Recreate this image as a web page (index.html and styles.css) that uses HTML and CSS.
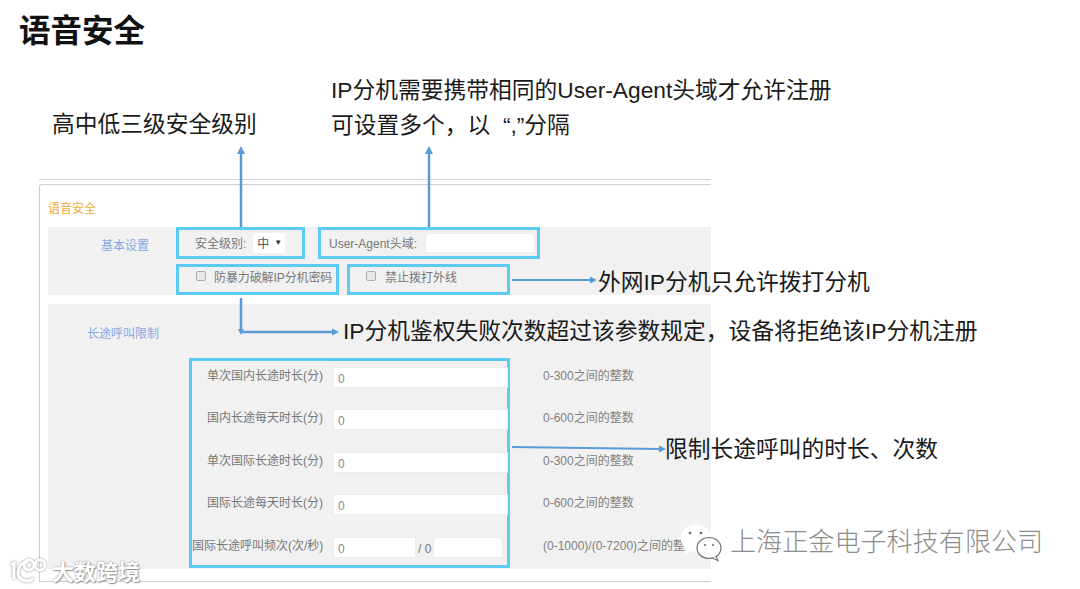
FILE: index.html
```html
<!DOCTYPE html>
<html lang="zh-CN">
<head>
<meta charset="utf-8">
<title>语音安全</title>
<link rel="stylesheet" href="styles.css">
</head>
<body>
<main class="slide">
  <h1 class="slide-title">语音安全</h1>

  <div class="rule"></div>
  <section class="panel">
    <h2 class="panel-title">语音安全</h2>

    <div class="block block-basic">
      <div class="block-label">基本设置</div>
      <div class="basic-rows">
        <div class="basic-row">
          <div class="box box-level">
            <span>安全级别:</span>
            <span class="select">中<i class="caret">▼</i></span>
          </div>
          <div class="box box-agent">
            <span>User-Agent头域:</span>
            <span class="field field-agent"></span>
          </div>
        </div>
        <div class="basic-row basic-row-checks">
          <label class="box box-brute"><span class="check"></span>防暴力破解IP分机密码</label>
          <label class="box box-outbound"><span class="check"></span>禁止拨打外线</label>
        </div>
      </div>
    </div>

    <div class="block block-long">
      <div class="block-label block-label-long">长途呼叫限制</div>
      <div class="box box-limits">
        <div class="limit-row"><span class="limit-name">单次国内长途时长(分)</span><span class="field field-wide">0</span></div>
        <div class="limit-row"><span class="limit-name">国内长途每天时长(分)</span><span class="field field-wide">0</span></div>
        <div class="limit-row"><span class="limit-name">单次国际长途时长(分)</span><span class="field field-wide">0</span></div>
        <div class="limit-row"><span class="limit-name">国际长途每天时长(分)</span><span class="field field-wide">0</span></div>
        <div class="limit-row"><span class="limit-name">国际长途呼叫频次(次/秒)</span><span class="field field-half">0</span><span class="slash">/ 0</span><span class="field field-third"></span></div>
      </div>
      <div class="hints">
        <div class="hint">0-300之间的整数</div>
        <div class="hint">0-600之间的整数</div>
        <div class="hint">0-300之间的整数</div>
        <div class="hint">0-600之间的整数</div>
        <div class="hint">(0-1000)/(0-7200)之间的整数</div>
      </div>
    </div>
  </section>

  <svg class="arrows" width="1080" height="589" viewBox="0 0 1080 589" aria-hidden="true">
    <g fill="none" stroke="#5b9bd5" stroke-width="2.500">
      <path d="M241 227V152"/>
      <path d="M429 227V152"/>
      <path d="M241 298V332H333"/>
    </g>
    <g fill="none" stroke="#5b9bd5" stroke-width="2">
      <path d="M512 280H592"/>
      <path d="M512 447L660 449"/>
    </g>
    <g fill="#5b9bd5">
      <path d="M241 146l-4 8h8z"/>
      <path d="M429 146l-4 8h8z"/>
      <path d="M597 280l-7-3.500v7z"/>
      <path d="M339 332l-7-3.500v7z"/>
      <path d="M666 449l-7-3.500v7z"/>
      <path d="M241 335l-3-6h6z"/>
    </g>
  </svg>

  <p class="callout callout-level">高中低三级安全级别</p>
  <p class="callout callout-agent">IP分机需要携带相同的User-Agent头域才允许注册<br>可设置多个，以&nbsp;&nbsp;“,”分隔</p>
  <p class="callout callout-outbound">外网IP分机只允许拨打分机</p>
  <p class="callout callout-brute">IP分机鉴权失败次数超过该参数规定，设备将拒绝该IP分机注册</p>
  <p class="callout callout-limits">限制长途呼叫的时长、次数</p>

  <div class="mark-company">
    <svg class="mark-wechat" width="46" height="40" viewBox="0 0 46 40" aria-hidden="true">
      <ellipse cx="16" cy="15" rx="15.500" ry="13.500" fill="#fff"/>
      <path d="M6 25l-1 6 7-3z" fill="#fff"/>
      <circle cx="10" cy="10" r="1.300" fill="#666"/>
      <circle cx="21" cy="10" r="1.300" fill="#666"/>
      <ellipse cx="29" cy="25" rx="12" ry="10.500" fill="#fff" stroke="#777" stroke-width="1.200"/>
      <path d="M36 33.500l2 4-6-2.500" fill="#fff" stroke="#777" stroke-width="1.200"/>
      <circle cx="25" cy="22" r="1" fill="#666"/>
      <circle cx="33" cy="22" r="1" fill="#666"/>
    </svg>
    <span class="mark-company-name">上海正金电子科技有限公司</span>
  </div>

  <div class="mark-source">
    <svg class="mark-logo" width="42" height="28" viewBox="0 0 42 28" aria-hidden="true">
      <g fill="none" stroke="#fff" stroke-width="3">
        <path d="M3 9l3-2v16"/>
        <path d="M20 6C12 6 10 13 10 17c0 5 4 8 9 8 3 0 5-1 6-3"/>
        <circle cx="21" cy="9" r="5"/>
        <circle cx="32" cy="9" r="5"/>
      </g>
    </svg>
    <span class="mark-source-name">大数跨境</span>
  </div>
</main>
</body>
</html>
```
FILE: styles.css
```css
* { box-sizing: border-box; }
html, body { margin: 0; padding: 0; background: #fff; }
body { font-family: "Liberation Sans", "Noto Sans CJK SC", sans-serif; }

.slide {
  position: relative;
  width: 1080px;
  height: 589px;
  overflow: hidden;
  padding-top: 179px;
}

.slide-title {
  position: absolute;
  left: 19px;
  top: 6px;
  margin: 0;
  font-family: "Noto Sans CJK SC", sans-serif;
  font-size: 31.500px;
  line-height: 44px;
  font-weight: 700;
  color: #111;
}

.rule {
  width: 672px;
  margin-left: 39px;
  margin-bottom: 4px;
  border-top: 1px solid #d4d4d4;
}

.panel {
  width: 672px;
  height: 398px;
  margin-left: 39px;
  border: 1px solid #cfcfcf;
  border-right: 0;
  border-radius: 3px 0 0 0;
  overflow: hidden;
  font-size: 12px;
  color: #777;
}

.panel-title {
  margin: 0;
  height: 42px;
  padding: 16px 0 0 8px;
  font-size: 12px;
  line-height: 16px;
  font-weight: 400;
  color: #f0a93c;
}

.block {
  display: flex;
  margin-left: 8px;
  background: #f1f1f1;
}

.block-basic { height: 68px; margin-bottom: 9px; }
.block-long { height: 265px; }

.block-label {
  flex: none;
  width: 128px;
  padding: 11px 0 0 53px;
  line-height: 16px;
  color: #86a7e6;
}

.block-label-long {
  width: 141px;
  padding: 22px 0 0 39px;
}

.basic-rows { display: flex; flex-direction: column; gap: 5px; }
.basic-row { display: flex; gap: 13px; height: 32px; }
.basic-row-checks { gap: 8px; }

.box {
  flex: none;
  display: flex;
  align-items: center;
  border: 3px solid #5ccbf2;
}

.box-level { width: 129px; padding-left: 16px; gap: 7px; }
.box-agent { width: 222px; padding-left: 8px; gap: 8px; }
.box-brute { width: 163px; padding: 0 0 6px 17px; letter-spacing: -0.100px; }
.box-outbound { width: 163px; padding: 0 0 6px 16px; }

.select {
  display: flex;
  align-items: center;
  width: 32px;
  height: 20px;
  padding-left: 4px;
  background: #fff;
  color: #555;
}

.caret {
  margin-left: 5px;
  font-size: 8px;
  font-style: normal;
  color: #333;
}

.field {
  flex: none;
  display: block;
  height: 21px;
  padding-left: 4px;
  background: #fff;
  border: 1px solid #ececec;
  color: #888;
  line-height: 22px;
}

.field-agent { width: 110px; height: 20px; }
.field-wide { width: 175px; }
.field-half { width: 83px; }
.field-third { width: 70px; }

.check {
  flex: none;
  width: 10px;
  height: 10px;
  margin-right: 8px;
  background: #e9e9e9;
  border: 1px solid #adadad;
  border-radius: 2px;
}

.box-outbound .check { margin-right: 9px; }

.box-limits {
  flex-direction: column;
  align-items: stretch;
  gap: 21.400px;
  width: 321px;
  height: 210px;
  margin-top: 54px;
  padding-top: 6px;
}

.limit-row { display: flex; height: 21px; flex: none; }

.limit-name {
  flex: none;
  width: 131px;
  margin-right: 10px;
  padding-top: 1px;
  text-align: right;
  white-space: nowrap;
  line-height: 16px;
}

.slash { flex: none; margin-left: 2px; width: 15px; line-height: 24px; }

.hints {
  flex: none;
  display: flex;
  flex-direction: column;
  gap: 21.400px;
  width: 168px;
  margin: 64px 0 0 33px;
  overflow: hidden;
}

.hint { flex: none; height: 21px; line-height: 16px; white-space: nowrap; color: #808080; }

.arrows { position: absolute; left: 0; top: 0; }

.callout {
  position: absolute;
  margin: 0;
  font-size: 22.750px;
  line-height: 35px;
  color: #1a1a1a;
  white-space: nowrap;
}

.callout-level { left: 52px; top: 107px; }
.callout-agent { left: 331px; top: 73px; }
.callout-outbound { left: 598px; top: 265px; }
.callout-brute { left: 343px; top: 314px; }
.callout-limits { left: 665px; top: 432px; }

.mark-company { position: absolute; left: 680px; top: 523px; width: 380px; height: 40px; }
.mark-wechat { position: absolute; left: 0; top: 0; }

.mark-company-name {
  position: absolute;
  left: 50px;
  top: -2px;
  font-family: "Noto Sans CJK SC", sans-serif;
  font-size: 26px;
  line-height: 38px;
  font-weight: 300;
  letter-spacing: 0.100px;
  color: #8c8c8c;
  white-space: nowrap;
  text-shadow: 1px 1px 0 #fff, -1px -1px 0 #fff;
}

.mark-source { position: absolute; left: 8px; top: 556px; width: 140px; height: 28px; }
.mark-logo { position: absolute; left: 0; top: 0; filter: drop-shadow(0 0 1px #888); }

.mark-source-name {
  position: absolute;
  left: 44px;
  top: 0;
  font-family: "Noto Sans CJK SC", sans-serif;
  font-size: 22px;
  line-height: 28px;
  font-weight: 700;
  color: #fff;
  white-space: nowrap;
  text-shadow: 0 0 2px #888, 1px 1px 1px #999;
}
```
